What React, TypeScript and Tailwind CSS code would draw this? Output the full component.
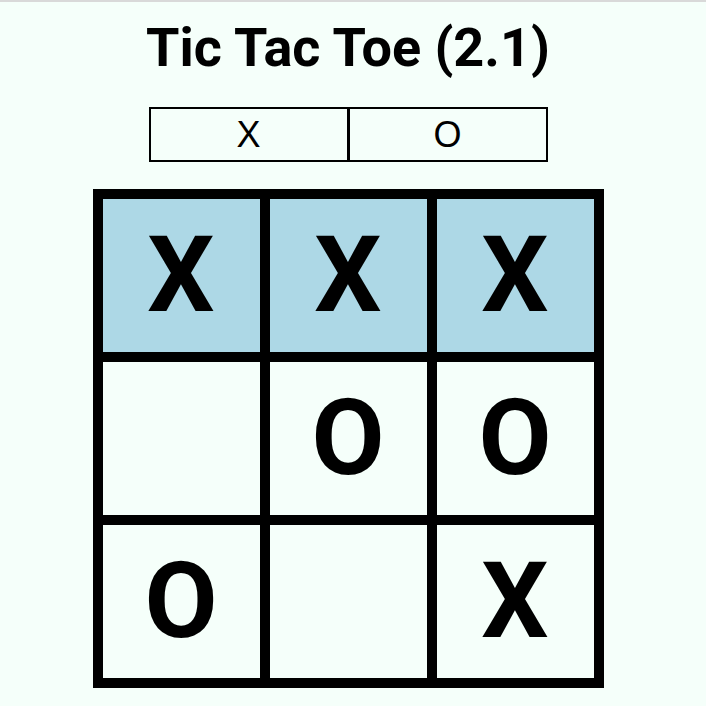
const board: (string | null)[] = ["X", "X", "X", null, "O", "O", "O", null, "X"]
const winning = [0, 1, 2]

const App = () => {
    return (
        <div className="min-h-[706px] w-[706px] bg-[#f5fffa] border-t-2 border-[#d9d9d9] font-['Roboto','Liberation_Sans',sans-serif] text-black">
            <div className="w-[696px] flex flex-col items-center">
                <h1 className="mt-[14px] text-[54px] leading-[64px] font-bold">
                    Tic Tac Toe (2.1)
                </h1>
                <div className="mt-[27px] flex border-2 border-black w-[399px] h-[55px]">
                    <div className="flex-1 flex items-center justify-center text-[36px] font-['Liberation_Sans',sans-serif] border-r-[3px] border-black">
                        X
                    </div>
                    <div className="flex-1 flex items-center justify-center text-[36px] font-['Liberation_Sans',sans-serif]">
                        O
                    </div>
                </div>
                <div className="mt-[27px] grid grid-cols-3 gap-[10px] p-[10px] bg-black">
                    {board.map((cell, i) => (
                        <div
                            key={i}
                            className={`w-[157px] h-[153px] flex items-center justify-center text-[106px] font-bold ${winning.includes(i) ? "bg-[#add8e6]" : "bg-[#f5fffa]"}`}
                        >
                            {cell}
                        </div>
                    ))}
                </div>
            </div>
        </div>
    )
}

export default App
